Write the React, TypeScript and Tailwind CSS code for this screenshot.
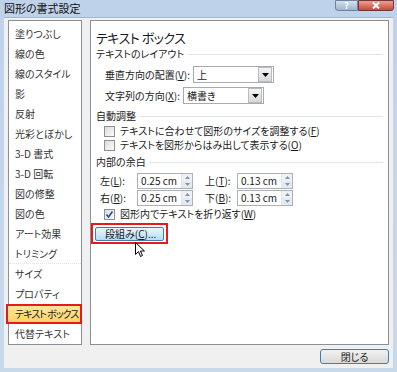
import React from "react";

const items = [
  "塗りつぶし",
  "線の色",
  "線のスタイル",
  "影",
  "反射",
  "光彩とぼかし",
  "3-D 書式",
  "3-D 回転",
  "図の修整",
  "図の色",
  "アート効果",
  "トリミング",
  "サイズ",
  "プロパティ",
  "テキスト ボックス",
  "代替テキスト",
];

const Section = ({ label }: { label: string }) => (
  <div className="flex items-center h-[12px] pl-[5px] pr-[5px] gap-[3px]">
    <span className="whitespace-nowrap">{label}</span>
    <div className="flex-1 h-px bg-[#dde6ee]" />
  </div>
);

const Check = ({ checked, label }: { checked?: boolean; label: React.ReactNode }) => (
  <div className="flex items-center h-[14px] pl-[13px] gap-[5px]">
    <div className="w-[11px] h-[11px] border border-[#8f8f8f] bg-gradient-to-br from-[#dcdcdc] to-[#fbfbfb] flex items-center justify-center">
      {checked && (
        <svg width="9" height="9" viewBox="0 0 9 9">
          <path d="M1.5 4.5 L3.5 7 L7.5 1.5" stroke="#1f4fa0" strokeWidth="1.6" fill="none" />
        </svg>
      )}
    </div>
    <span className="whitespace-nowrap">{label}</span>
  </div>
);

const Select = ({ value, w }: { value: string; w: string }) => (
  <div className={`${w} h-[17px] border border-[#a7abb0] bg-white flex items-center`}>
    <span className="flex-1 pl-[3px]">{value}</span>
    <div className="w-[14px] h-[15px] mr-px border border-[#b8bcc2] bg-gradient-to-b from-[#f4f4f4] to-[#d8d8d8] flex items-center justify-center">
      <svg width="7" height="4" viewBox="0 0 7 4">
        <path d="M0 0 H7 L3.5 4 Z" fill="#000" />
      </svg>
    </div>
  </div>
);

const Spin = ({ value }: { value: string }) => (
  <div className="w-[56px] h-[16px] border border-[#abb0b6] bg-white flex items-center">
    <span className="flex-1 pl-[3px] text-[10px]">{value}</span>
    <div className="w-[11px] h-[14px] flex flex-col border-l border-[#e2e6ea]">
      <div className="flex-1 flex items-center justify-center bg-[#eef2f6]">
        <svg width="5" height="3" viewBox="0 0 5 3"><path d="M0 3 L2.5 0 L5 3 Z" fill="#7e95ad" /></svg>
      </div>
      <div className="flex-1 flex items-center justify-center bg-[#e4eaf0]">
        <svg width="5" height="3" viewBox="0 0 5 3"><path d="M0 0 H5 L2.5 3 Z" fill="#7e95ad" /></svg>
      </div>
    </div>
  </div>
);

const U = ({ c }: { c: string }) => <span className="underline">{c}</span>;

export default function App() {
  return (
    <div className="w-[397px] h-[372px] flex flex-col bg-gradient-to-b from-[#bed2ea] to-[#c9d9ec] text-[10px] text-[#1a1a1a] font-['Noto_Sans_CJK_JP',sans-serif] [font-feature-settings:'palt'] leading-none overflow-hidden">
      {/* title bar */}
      <div className="h-[17px] flex items-start">
        <div className="flex-1 pl-[4px] pt-[3px] text-[11px] text-[#111]">図形の書式設定</div>
        <div className="flex mr-[3px]">
          <div className="w-[23px] h-[11px] border border-[#6d83a3] rounded-bl-[3px] bg-gradient-to-b from-[#d6e1ee] to-[#9fb4cf] flex items-center justify-center text-[9px] font-bold text-white">?</div>
          <div className="w-[36px] h-[11px] border border-[#7b3434] rounded-br-[3px] bg-gradient-to-b from-[#e8a195] to-[#c4483a] flex items-center justify-center">
            <svg width="8" height="7" viewBox="0 0 8 7">
              <path d="M1 0.5 L7 6.5 M7 0.5 L1 6.5" stroke="#fff" strokeWidth="2" />
            </svg>
          </div>
        </div>
      </div>

      {/* client */}
      <div className="flex-1 mx-[4px] mb-[4px] bg-[#f0f0f0] border-t border-[#a3b5cc] flex flex-col px-[4px] pt-[2px]">
        <div className="flex gap-[8px] h-[325px]">
          {/* category list */}
          <div className="w-[74px] border border-[#8b8f96] bg-white pt-[3px]">
            {items.map((it, i) =>
              it === "テキスト ボックス" ? (
                <div key={i} className="h-[20px] -ml-[3px] -mr-[1px] border-2 border-[#e51a1a] bg-gradient-to-b from-[#ffe69a] to-[#fcd467] flex items-center pl-[7px] whitespace-nowrap tracking-[-1px]">
                  {it}
                </div>
              ) : (
                <div
                  key={i}
                  className={`h-[20px] flex items-center pl-[6px] text-[#333] whitespace-nowrap ${it === "トリミング" ? "border-b border-dotted border-[#e3e3e3]" : ""}`}
                >
                  {it}
                </div>
              )
            )}
          </div>

          {/* content panel */}
          <div className="flex-1 border border-[#8b8f96] bg-white flex flex-col pt-[10px] relative">
            <div className="h-[13px] pl-[5px] text-[13px] tracking-[-0.5px] flex items-center">テキスト ボックス</div>
            <div className="mt-[4px]">
              <Section label="テキストのレイアウト" />
            </div>
            <div className="mt-[6px] h-[17px] flex items-center pl-[14px]">
              <span className="w-[88px]">垂直方向の配置(<U c="V" />):</span>
              <Select value="上" w="w-[81px]" />
            </div>
            <div className="mt-[4px] h-[17px] flex items-center pl-[14px]">
              <span className="w-[78px]">文字列の方向(<U c="X" />):</span>
              <Select value="横書き" w="w-[81px]" />
            </div>
            <div className="mt-[6px]">
              <Section label="自動調整" />
            </div>
            <div className="mt-[2px]">
              <Check label={<>テキストに合わせて図形のサイズを調整する(<U c="F" />)</>} />
              <Check label={<>テキストを図形からはみ出して表示する(<U c="O" />)</>} />
            </div>
            <div className="mt-[4px]">
              <Section label="内部の余白" />
            </div>
            <div className="mt-[5px] h-[16px] flex items-center pl-[9px]">
              <span className="w-[37px]">左(<U c="L" />):</span>
              <Spin value="0.25 cm" />
              <span className="w-[32px] ml-[12px]">上(<U c="T" />):</span>
              <Spin value="0.13 cm" />
            </div>
            <div className="mt-[1px] h-[16px] flex items-center pl-[9px]">
              <span className="w-[37px]">右(<U c="R" />):</span>
              <Spin value="0.25 cm" />
              <span className="w-[32px] ml-[12px]">下(<U c="B" />):</span>
              <Spin value="0.13 cm" />
            </div>
            <div className="mt-[1px]">
              <Check checked label={<>図形内でテキストを折り返す(<U c="W" />)</>} />
            </div>
            <div className="mt-[2px] w-[77px] h-[21px] border-2 border-[#e51a1a] flex items-center pl-[2px]">
              <div className="w-[69px] h-[14px] border border-[#3c7fb1] rounded-[2px] bg-gradient-to-b from-[#eaf6fd] to-[#b4def4] flex items-center pl-[9px]">
                段組み(<U c="C" />)...
              </div>
            </div>
            {/* mouse cursor */}
            <svg className="absolute left-[44px] top-[221px]" width="11" height="16" viewBox="0 0 11 16">
              <path d="M0.5 0.5 V12.5 L3.5 9.5 L5.5 14.5 L7.5 13.5 L5.5 9 H9.5 Z" fill="#fff" stroke="#000" strokeWidth="1" />
            </svg>
          </div>
        </div>

        {/* footer */}
        <div className="flex justify-end mt-[4px]">
          <div className="w-[69px] h-[15px] border border-[#3c7fb1] rounded-[3px] bg-gradient-to-b from-[#f2f2f2] to-[#d9d9d9] flex items-center justify-center">
            閉じる
          </div>
        </div>
      </div>
    </div>
  );
}
